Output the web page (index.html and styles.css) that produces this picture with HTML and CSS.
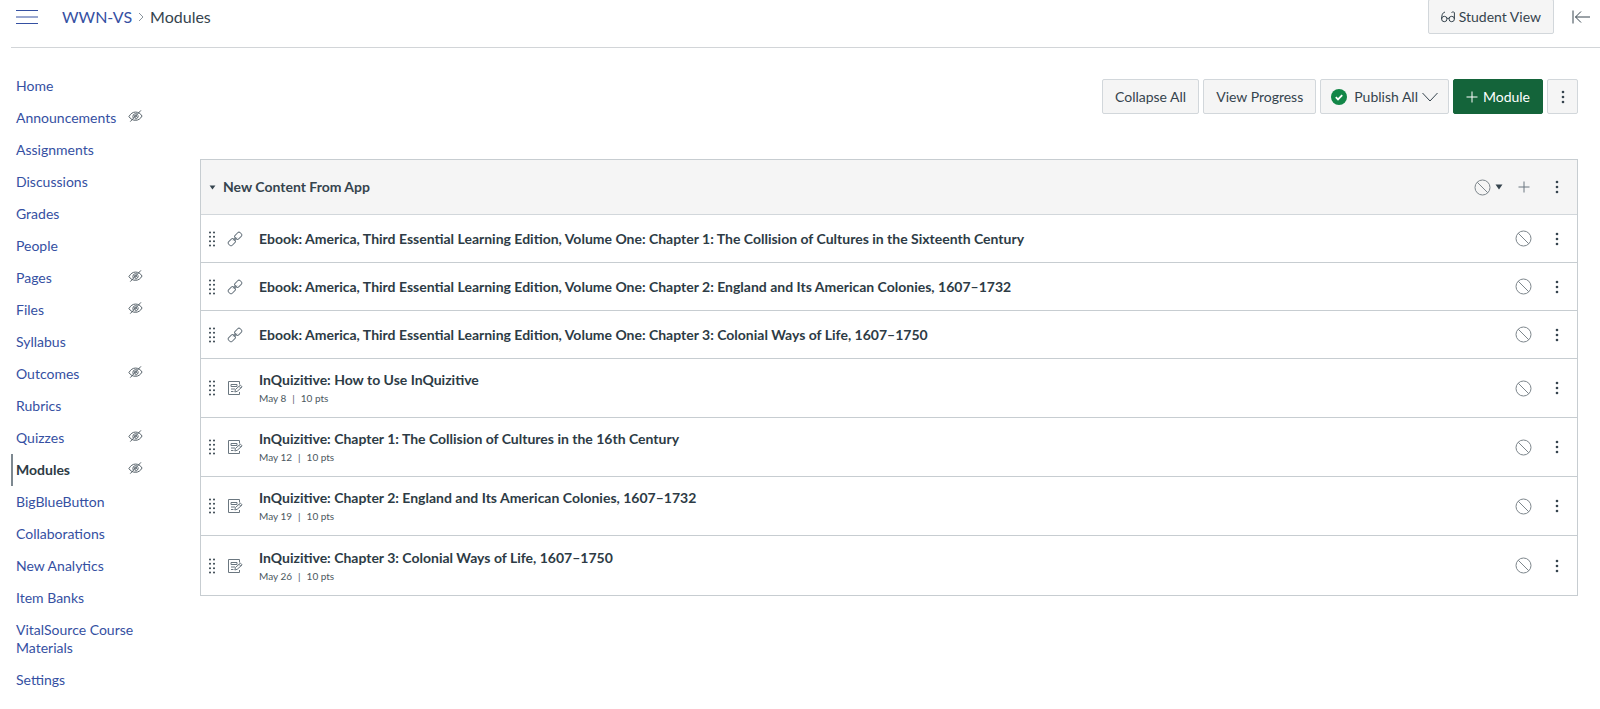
FILE: index.html
```html
<!DOCTYPE html>
<html lang="en">
<head>
<meta charset="utf-8">
<title>Modules</title>
<link rel="stylesheet" href="styles.css">
</head>
<body>
<svg class="sprite" aria-hidden="true">
  <symbol id="eye-off" viewBox="0 0 16 14">
    <path d="M1 7.6C2.8 4.4 5.2 2.8 8 2.8s5.2 1.4 7 4.2c-1.6 3-4.200 4.600-7 4.600S2.600 10.300 1 7.600Z"/>
    <path d="M2.400 13 13.800 1M5.600 9.300C4.500 6.600 6 4.600 8 4.500c1 0 1.700.3 2.200.8M10.700 6.200c.7 2.500-1.300 4.300-3.500 3.900"/>
    <circle cx="8" cy="7.200" r="1.100"/>
  </symbol>
  <symbol id="dots" viewBox="0 0 4 14">
    <circle cx="2" cy="2" r="1.300"/><circle cx="2" cy="7" r="1.300"/><circle cx="2" cy="12" r="1.300"/>
  </symbol>
  <symbol id="ban" viewBox="0 0 17 17">
    <circle cx="8.500" cy="8.500" r="7.500"/><path d="m3.200 3.200 10.600 10.600"/>
  </symbol>
  <symbol id="grip" viewBox="0 0 8 16">
    <circle cx="2" cy="1.500" r="1"/><circle cx="6" cy="1.500" r="1"/>
    <circle cx="2" cy="5.800" r="1"/><circle cx="6" cy="5.800" r="1"/>
    <circle cx="2" cy="10.200" r="1"/><circle cx="6" cy="10.200" r="1"/>
    <circle cx="2" cy="14.500" r="1"/><circle cx="6" cy="14.500" r="1"/>
  </symbol>
  <symbol id="link" viewBox="0 0 16 16">
    <rect x="-3.600" y="-2.500" width="7.200" height="5" rx="1.800" transform="translate(11.200 4.800) rotate(-45)"/>
    <rect x="-3.600" y="-2.500" width="7.200" height="5" rx="1.800" transform="translate(4.800 11.200) rotate(-45)"/>
    <path d="m6 9.200 3.200-3.200M6.800 10 10 6.800"/>
  </symbol>
  <symbol id="quiz" viewBox="0 0 16 16">
    <path d="M12.500 4.500v-3h-11v13h11v-2.500M4 4.500h6v2H4ZM4 9h4M4 11.500h2.500"/>
    <path d="m7.800 12 .7-2.600 4.900-4.300 1.700 1.800-4.900 4.400ZM12 6.300l1.800 1.800"/>
  </symbol>
  <symbol id="caret" viewBox="0 0 8 6"><path d="M.5.500h7L4 5.500Z"/></symbol>
  <symbol id="plus" viewBox="0 0 12 12"><path d="M6 .5v11M.5 6h11"/></symbol>
</svg>

<header class="topbar">
  <button class="icon-btn menu-btn" aria-label="Course navigation menu">
    <svg class="line" width="22" height="16" viewBox="0 0 22 16"><path d="M0 1.500h22M0 8h22M0 14.500h22"/></svg>
  </button>
  <nav class="crumbs" aria-label="Breadcrumbs">
    <a href="#">WWN-VS</a>
    <svg class="line chevron" width="6" height="10" viewBox="0 0 6 10"><path d="m1 1 4 4-4 4"/></svg>
    <span>Modules</span>
  </nav>
  <button class="btn student-view">
    <svg class="line" width="14" height="12" viewBox="0 0 14 12"><circle cx="3.300" cy="8" r="2.700"/><circle cx="10.700" cy="8" r="2.700"/><path d="M.6 8C.6 4 1.500 1.600 4 1M13.400 8V1.500c-1-.8-2-.6-2.900 0M6 7.500q1-.8 2 0"/></svg>
    Student View
  </button>
  <button class="icon-btn collapse-btn" aria-label="Collapse panel">
    <svg class="line" width="18" height="14" viewBox="0 0 18 14"><path d="M1 .5v13M3.500 7H18M9 1.500 3.500 7 9 12.500"/></svg>
  </button>
</header>

<div class="layout">
  <nav class="side" aria-label="Course">
    <ul>
      <li><a href="#">Home</a></li>
      <li><a href="#">Announcements</a><svg class="line eye"><use href="#eye-off"/></svg></li>
      <li><a href="#">Assignments</a></li>
      <li><a href="#">Discussions</a></li>
      <li><a href="#">Grades</a></li>
      <li><a href="#">People</a></li>
      <li><a href="#">Pages</a><svg class="line eye"><use href="#eye-off"/></svg></li>
      <li><a href="#">Files</a><svg class="line eye"><use href="#eye-off"/></svg></li>
      <li><a href="#">Syllabus</a></li>
      <li><a href="#">Outcomes</a><svg class="line eye"><use href="#eye-off"/></svg></li>
      <li><a href="#">Rubrics</a></li>
      <li><a href="#">Quizzes</a><svg class="line eye"><use href="#eye-off"/></svg></li>
      <li class="active"><a href="#" aria-current="page">Modules</a><svg class="line eye"><use href="#eye-off"/></svg></li>
      <li><a href="#">BigBlueButton</a></li>
      <li><a href="#">Collaborations</a></li>
      <li><a href="#">New Analytics</a></li>
      <li><a href="#">Item Banks</a></li>
      <li><a href="#">VitalSource Course Materials</a></li>
      <li><a href="#">Settings</a></li>
    </ul>
  </nav>

  <main class="content">
    <div class="toolbar">
      <button class="btn">Collapse All</button>
      <button class="btn">View Progress</button>
      <button class="btn publish">
        <svg width="16" height="16" viewBox="0 0 16 16"><circle cx="8" cy="8" r="8" fill="#128647"/><path d="m4.800 8.200 2.200 2.200 4.200-4.300" fill="none" stroke="#fff" stroke-width="1.800"/></svg>
        <span>Publish All</span>
        <svg class="line" width="16" height="10" viewBox="0 0 16 10"><path d="m.5 1 7.500 8 7.500-8"/></svg>
      </button>
      <button class="btn primary"><svg class="line" width="12" height="12"><use href="#plus"/></svg>Module</button>
      <button class="btn more" aria-label="More options"><svg class="solid" width="4" height="14"><use href="#dots"/></svg></button>
    </div>

    <section class="module">
      <div class="module-head">
        <button class="icon-btn toggle" aria-label="Collapse module"><svg class="solid" width="7" height="5"><use href="#caret"/></svg></button>
        <h2>New Content From App</h2>
        <button class="icon-btn status" aria-label="Module unpublished"><svg class="line ban" width="17" height="17"><use href="#ban"/></svg><svg class="solid" width="8" height="6"><use href="#caret"/></svg></button>
        <button class="icon-btn add" aria-label="Add item"><svg class="line" width="12" height="12"><use href="#plus"/></svg></button>
        <button class="icon-btn kebab" aria-label="Module options"><svg class="solid" width="4" height="14"><use href="#dots"/></svg></button>
      </div>
      <ul class="items">
        <li class="item">
          <svg class="solid grip"><use href="#grip"/></svg><svg class="line kind"><use href="#link"/></svg>
          <div class="text"><a href="#">Ebook: America, Third Essential Learning Edition, Volume One: Chapter 1: The Collision of Cultures in the Sixteenth Century</a></div>
          <button class="icon-btn" aria-label="Unpublished"><svg class="line ban" width="17" height="17"><use href="#ban"/></svg></button>
          <button class="icon-btn kebab" aria-label="Item options"><svg class="solid" width="4" height="14"><use href="#dots"/></svg></button>
        </li>
        <li class="item">
          <svg class="solid grip"><use href="#grip"/></svg><svg class="line kind"><use href="#link"/></svg>
          <div class="text"><a href="#">Ebook: America, Third Essential Learning Edition, Volume One: Chapter 2: England and Its American Colonies, 1607–1732</a></div>
          <button class="icon-btn" aria-label="Unpublished"><svg class="line ban" width="17" height="17"><use href="#ban"/></svg></button>
          <button class="icon-btn kebab" aria-label="Item options"><svg class="solid" width="4" height="14"><use href="#dots"/></svg></button>
        </li>
        <li class="item">
          <svg class="solid grip"><use href="#grip"/></svg><svg class="line kind"><use href="#link"/></svg>
          <div class="text"><a href="#">Ebook: America, Third Essential Learning Edition, Volume One: Chapter 3: Colonial Ways of Life, 1607–1750</a></div>
          <button class="icon-btn" aria-label="Unpublished"><svg class="line ban" width="17" height="17"><use href="#ban"/></svg></button>
          <button class="icon-btn kebab" aria-label="Item options"><svg class="solid" width="4" height="14"><use href="#dots"/></svg></button>
        </li>
        <li class="item">
          <svg class="solid grip"><use href="#grip"/></svg><svg class="line kind"><use href="#quiz"/></svg>
          <div class="text"><a href="#">InQuizitive: How to Use InQuizitive</a><p><span>May 8</span><span>|</span><span>10 pts</span></p></div>
          <button class="icon-btn" aria-label="Unpublished"><svg class="line ban" width="17" height="17"><use href="#ban"/></svg></button>
          <button class="icon-btn kebab" aria-label="Item options"><svg class="solid" width="4" height="14"><use href="#dots"/></svg></button>
        </li>
        <li class="item">
          <svg class="solid grip"><use href="#grip"/></svg><svg class="line kind"><use href="#quiz"/></svg>
          <div class="text"><a href="#">InQuizitive: Chapter 1: The Collision of Cultures in the 16th Century</a><p><span>May 12</span><span>|</span><span>10 pts</span></p></div>
          <button class="icon-btn" aria-label="Unpublished"><svg class="line ban" width="17" height="17"><use href="#ban"/></svg></button>
          <button class="icon-btn kebab" aria-label="Item options"><svg class="solid" width="4" height="14"><use href="#dots"/></svg></button>
        </li>
        <li class="item">
          <svg class="solid grip"><use href="#grip"/></svg><svg class="line kind"><use href="#quiz"/></svg>
          <div class="text"><a href="#">InQuizitive: Chapter 2: England and Its American Colonies, 1607–1732</a><p><span>May 19</span><span>|</span><span>10 pts</span></p></div>
          <button class="icon-btn" aria-label="Unpublished"><svg class="line ban" width="17" height="17"><use href="#ban"/></svg></button>
          <button class="icon-btn kebab" aria-label="Item options"><svg class="solid" width="4" height="14"><use href="#dots"/></svg></button>
        </li>
        <li class="item">
          <svg class="solid grip"><use href="#grip"/></svg><svg class="line kind"><use href="#quiz"/></svg>
          <div class="text"><a href="#">InQuizitive: Chapter 3: Colonial Ways of Life, 1607–1750</a><p><span>May 26</span><span>|</span><span>10 pts</span></p></div>
          <button class="icon-btn" aria-label="Unpublished"><svg class="line ban" width="17" height="17"><use href="#ban"/></svg></button>
          <button class="icon-btn kebab" aria-label="Item options"><svg class="solid" width="4" height="14"><use href="#dots"/></svg></button>
        </li>
      </ul>
    </section>
  </main>
</div>
</body>
</html>
```

FILE: styles.css
```css
* { box-sizing: border-box; }

body {
  margin: 0;
  background: #fff;
  color: #36444e;
  font: 14px/18px Lato, "Open Sans", sans-serif;
}

ul, h2, p { margin: 0; padding: 0; }
ul { list-style: none; }
a { color: #3550a2; text-decoration: none; }
svg { display: block; flex: none; }

.sprite { position: absolute; width: 0; height: 0; }
.line { fill: none; stroke: currentColor; stroke-width: 1; }
.solid { fill: currentColor; }

.btn {
  display: flex;
  align-items: center;
  justify-content: center;
  height: 35px;
  padding: 0 12px;
  border: 1px solid #d2d7db;
  border-radius: 2px;
  background: #f5f5f5;
  color: #36444e;
  font: inherit;
}

.icon-btn {
  display: flex;
  align-items: center;
  justify-content: center;
  padding: 0;
  border: 0;
  background: none;
  color: #36444e;
}

.topbar {
  display: flex;
  align-items: center;
  height: 48px;
  margin-left: 11px;
  padding: 0 10px 14px 5px;
  border-bottom: 1px solid #d2d5d8;
}
.menu-btn { color: #3550a2; }
.crumbs {
  display: flex;
  align-items: center;
  gap: 6px;
  margin-left: 24px;
  font-size: 16px;
  line-height: 20px;
}
.chevron { color: #8b959e; }
.student-view { gap: 4px; margin-left: auto; }
.collapse-btn { margin-left: 18px; }

.layout { display: flex; }

.side { width: 200px; padding: 22px 0 0 11px; }
.side li {
  display: flex;
  justify-content: space-between;
  width: 132px;
  padding: 7px 0 7px 5px;
}
.side .eye { width: 15px; height: 14px; color: #4c5860; }
.side .active { padding-left: 3px; border-left: 2px solid #7d8890; }
.active a { color: #2d3b45; font-weight: 700; }

.content { flex: 1; min-width: 0; padding: 31px 22px 0 0; }
.toolbar { display: flex; justify-content: flex-end; gap: 4px; }
.publish { padding: 0 10px; }
.publish span { margin: 0 4px 0 7px; }
.primary { gap: 5px; border-color: #14643a; background: #14643a; color: #fff; }
.more { width: 31px; padding: 0; }

.module { margin-top: 45px; border: 1px solid #c7cdd1; }
.module-head {
  display: flex;
  align-items: center;
  height: 55px;
  border-bottom: 1px solid #d2d7db;
  background: #f5f5f5;
}
.module-head h2 { flex: 1; font-size: 14px; line-height: 20px; }
.toggle { width: 22px; }
.status { gap: 4px; margin-right: 15px; }
.ban { color: #7d868c; }
.add { color: #6b7780; }
.kebab { width: 20px; margin: 0 10px 0 17px; }

.item {
  display: flex;
  align-items: center;
  min-height: 48px;
  padding-left: 7px;
  border-bottom: 1px solid #c7cdd1;
}
.item:last-child { border-bottom: 0; }
.item:has(p) { min-height: 59px; }
.item .kebab { margin-left: 15px; }
.grip { width: 8px; height: 16px; }
.kind { width: 16px; height: 16px; margin: 0 16px 0 11px; color: #6b7780; }
.text { flex: 1; min-width: 0; }
.text a { display: block; color: #2d3b45; font-weight: 700; line-height: 20px; }
.text p { display: flex; gap: 6px; color: #4c5860; font-size: 10px; line-height: 16px; }
```
